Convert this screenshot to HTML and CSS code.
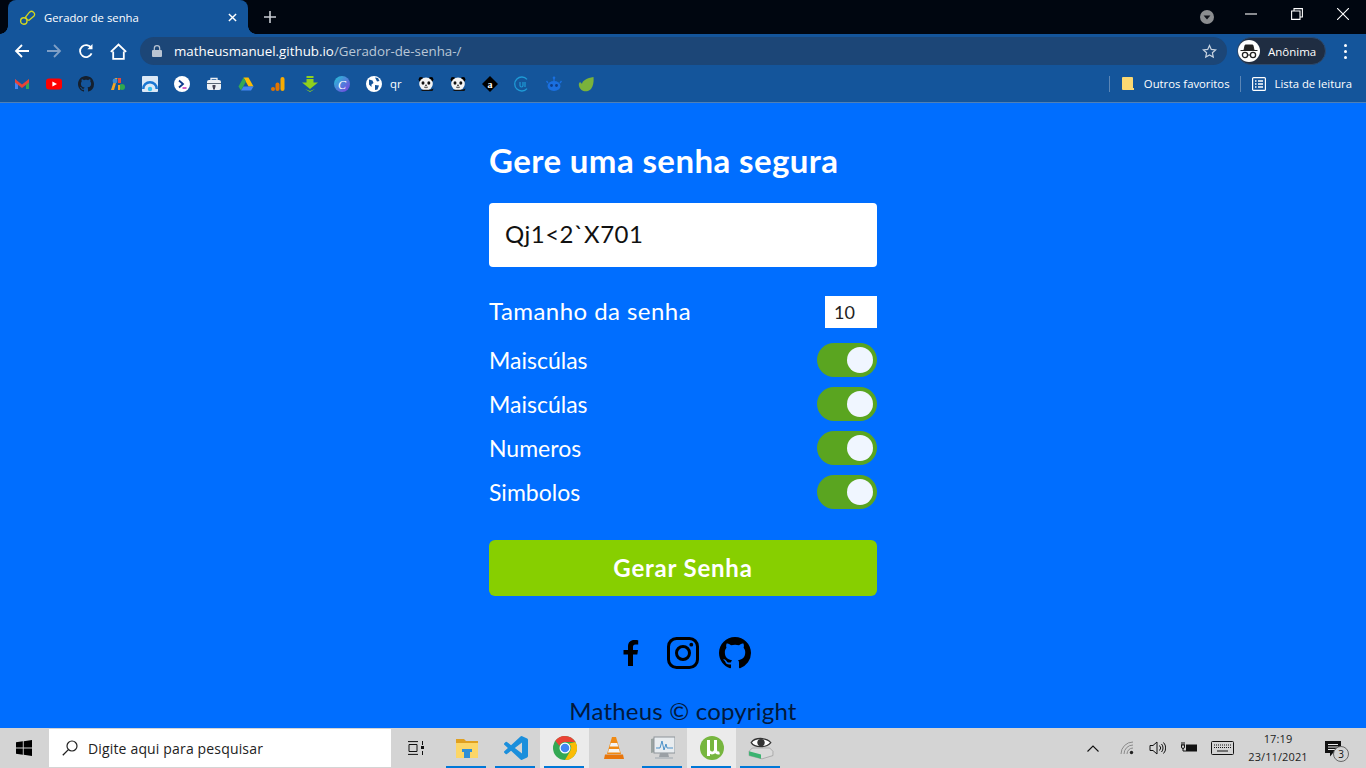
FILE: index.html
```html
<!DOCTYPE html>
<html lang="pt-BR">
<head>
<meta charset="utf-8">
<title>Gerador de senha</title>
<link rel="stylesheet" href="styles.css">
</head>
<body>
<svg class="defs" width="0" height="0" aria-hidden="true">
  <defs>
    <symbol id="octo" viewBox="0 0 16 16"><path d="M8 0C3.58 0 0 3.58 0 8c0 3.54 2.29 6.53 5.47 7.59.4.07.55-.17.55-.38 0-.19-.01-.82-.01-1.49-2.01.37-2.53-.49-2.69-.94-.09-.23-.48-.94-.82-1.13-.28-.15-.68-.52-.01-.53.63-.01 1.08.58 1.23.82.72 1.21 1.87.87 2.33.66.07-.52.28-.87.51-1.07-1.78-.2-3.64-.89-3.64-3.95 0-.87.31-1.59.82-2.15-.08-.2-.36-1.02.08-2.12 0 0 .67-.21 2.2.82.64-.18 1.32-.27 2-.27.68 0 1.36.09 2 .27 1.53-1.04 2.2-.82 2.2-.82.44 1.1.16 1.92.08 2.12.51.56.82 1.27.82 2.15 0 3.07-1.87 3.75-3.65 3.95.29.25.54.73.54 1.48 0 1.07-.01 1.93-.01 2.2 0 .21.15.46.55.38A8.013 8.013 0 0016 8c0-4.42-3.58-8-8-8z"/></symbol>
    <symbol id="panda" viewBox="0 0 16 16"><circle cx="3" cy="3.500" r="2.400" fill="#000"/><circle cx="13" cy="3.500" r="2.400" fill="#000"/><ellipse cx="8" cy="8" rx="6.800" ry="6.400" fill="#f4f4f4"/><ellipse cx="5" cy="7" rx="1.500" ry="1.800" fill="#111"/><ellipse cx="10.800" cy="7" rx="1.500" ry="1.800" fill="#111"/><circle cx="8" cy="9.500" r=".9" fill="#333"/><path d="M6 11q2 1.600 4 0" stroke="#555" fill="none"/><path d="M2.500 15h12l1-2.500-3 1.300H5z" fill="#111"/></symbol>
  </defs>
</svg>

<header class="browser">
  <div class="tabstrip">
    <div class="tab">
      <svg class="tab-fav" viewBox="0 0 17 17"><path d="M6.500 8.200l4-5a3 3 0 014.500 3.900l-5 4.200-1.600-.4z" fill="none" stroke="#d4d81e" stroke-width="1.300"/><circle cx="4.800" cy="12" r="3.200" fill="none" stroke="#d4d81e" stroke-width="1.400"/></svg>
      <span class="tab-title">Gerador de senha</span>
      <svg class="tab-x" viewBox="0 0 10 10"><path d="M1 1l8 8M9 1L1 9" stroke="#fff" stroke-width="1.600"/></svg>
    </div>
    <svg class="newtab" viewBox="0 0 12 12"><path d="M6 0v12M0 6h12" stroke="#c8ccd2" stroke-width="1.600"/></svg>
    <div class="strip-spacer"></div>
    <svg class="tabsearch" viewBox="0 0 14 14"><circle cx="7" cy="7" r="7" fill="#8b8d90"/><path d="M3.600 5.400h6.800L7 9.400z" fill="#10131a"/></svg>
    <div class="winbtn"><svg viewBox="0 0 10 10"><path d="M0 5h10" stroke="#fff" stroke-width=".9"/></svg></div>
    <div class="winbtn"><svg viewBox="0 0 10 10"><path d="M.5 2.500h7v7h-7zM2.500 2.500v-2h7v7h-2" fill="none" stroke="#fff" stroke-width=".9"/></svg></div>
    <div class="winbtn"><svg viewBox="0 0 10 10"><path d="M0 0l10 10M10 0L0 10" stroke="#fff" stroke-width=".9"/></svg></div>
  </div>

  <div class="toolbar">
    <button class="navbtn"><svg viewBox="0 0 16 16" width="16" height="16"><path d="M15 8H2M8 2L2 8l6 6" fill="none" stroke="#fff" stroke-width="1.800"/></svg></button>
    <button class="navbtn"><svg viewBox="0 0 16 16" width="16" height="16"><path d="M1 8h13M8 2l6 6-6 6" fill="none" stroke="#7f9fc6" stroke-width="1.800"/></svg></button>
    <button class="navbtn"><svg viewBox="0 0 16 16" width="16" height="16"><path d="M13.600 10.400A6 6 0 1113.200 5" fill="none" stroke="#fff" stroke-width="1.800"/><path d="M14.500 1v5.200H9.300z" fill="#fff"/></svg></button>
    <button class="navbtn"><svg viewBox="0 0 16 16" width="17" height="17"><path d="M3 8v7h10V8M.8 8.400L8 1.400l7.200 7" fill="none" stroke="#fff" stroke-width="1.700"/></svg></button>
    <div class="omnibox">
      <svg class="lock" viewBox="0 0 10 12" width="10" height="12"><path d="M2.300 5V3.400a2.700 2.700 0 015.400 0V5" fill="none" stroke="#b9c4d2" stroke-width="1.200"/><rect y="5" width="10" height="7" rx="1" fill="#b9c4d2"/></svg>
      <span class="url"><span class="url-host">matheusmanuel.github.io</span>/Gerador-de-senha-/</span>
      <svg class="star" viewBox="0 0 16 16" width="15" height="15"><path d="M8 1.600l1.900 4.200 4.600.5-3.400 3.100.9 4.500-4-2.300-4 2.300.9-4.500L1.500 6.300l4.600-.5z" fill="none" stroke="#c8d3e0" stroke-width="1.300"/></svg>
    </div>
    <div class="profile">
      <span class="avatar"><svg viewBox="0 0 20 20" width="20" height="20"><path d="M1.500 9.500h17M5 9l1.200-5h7.600L15 9z" fill="#222" stroke="#222"/><circle cx="6" cy="14" r="2.600" fill="none" stroke="#222" stroke-width="1.300"/><circle cx="14" cy="14" r="2.600" fill="none" stroke="#222" stroke-width="1.300"/><path d="M8.500 14h3" stroke="#222"/></svg></span>
      <span class="profile-name">Anônima</span>
    </div>
    <div class="menu-dots"><i></i><i></i><i></i></div>
  </div>

  <nav class="bookmarks">
    <span class="bm"><svg viewBox="0 0 16 16"><path d="M1 3v10h3V7z" fill="#4285f4"/><path d="M15 3v10h-3V7z" fill="#34a853"/><path d="M1 3l7 5.500L15 3v3.500L8 12 1 6.500z" fill="#ea4335"/></svg></span>
    <span class="bm"><svg viewBox="0 0 16 16"><rect y="2.500" width="16" height="11" rx="3" fill="#f00"/><path d="M6.400 5.400L11 8l-4.600 2.600z" fill="#fff"/></svg></span>
    <span class="bm"><svg viewBox="0 0 16 16" fill="#15202e"><use href="#octo"/></svg></span>
    <span class="bm"><svg viewBox="0 0 16 16"><path d="M1 14L5 2h2.500L4 14z" fill="#f5a623"/><circle cx="5" cy="5" r="2.400" fill="#3d8bd4"/><path d="M8 2h3v5H8z" fill="#e8483a"/><circle cx="12" cy="11" r="3" fill="#2fa84f"/><path d="M8 9h2v5H8z" fill="#f5a623"/></svg></span>
    <span class="bm"><svg viewBox="0 0 16 16"><rect width="16" height="16" rx="1" fill="#dbe8f6"/><path d="M0 13a8 8 0 0116 0h-2.500a5.500 5.500 0 00-11 0z" fill="#1976d2"/><circle cx="8" cy="13" r="2.200" fill="#35c0ef"/></svg></span>
    <span class="bm"><svg viewBox="0 0 16 16"><circle cx="8" cy="8" r="8" fill="#fff"/><path d="M5 4.500L9 8l-4 3.500" fill="none" stroke="#0b3a8c" stroke-width="1.800"/><path d="M8.500 12h4" stroke="#c02fb0" stroke-width="1.500"/></svg></span>
    <span class="bm"><svg viewBox="0 0 16 16"><rect x="1" y="4" width="14" height="10" rx="2" fill="#eef1f5"/><path d="M5 4V2.500h6V4" fill="none" stroke="#eef1f5" stroke-width="1.300"/><path d="M1 7.500h14" stroke="#5a6776"/><path d="M6.500 9h3v2.500H9v2H7v-2h-.5z" fill="#445"/></svg></span>
    <span class="bm"><svg viewBox="0 0 16 16"><path d="M5.500 1.500h5l5 9h-5z" fill="#fbbc04"/><path d="M5.500 1.500L.5 10.500 3 14.500l5-9z" fill="#34a853"/><path d="M3 14.500h10l2.500-4h-10z" fill="#4285f4"/></svg></span>
    <span class="bm"><svg viewBox="0 0 16 16"><rect x="10.500" y="1" width="4" height="14" rx="2" fill="#f9ab00"/><rect x="5.500" y="6.500" width="4" height="8.500" rx="2" fill="#e37400"/><circle cx="3" cy="13" r="2" fill="#e37400"/></svg></span>
    <span class="bm"><svg viewBox="0 0 16 16"><path d="M4.500 0h7v2h-7zM4.500 3h7v3.500H16L8 13 0 6.500h4.500z" fill="#8fd01c"/><path d="M3 13l5 3 5-3-5 2z" fill="#8fd01c"/></svg></span>
    <span class="bm"><svg viewBox="0 0 16 16"><defs><linearGradient id="cv" x1="0" y1="0" x2="1" y2="1"><stop offset="0" stop-color="#22c6d6"/><stop offset="1" stop-color="#7c3ce0"/></linearGradient></defs><circle cx="8" cy="8" r="8" fill="url(#cv)"/><text class="ico-c" x="8" y="12.500" text-anchor="middle">C</text></svg></span>
    <span class="bm bm-text"><svg viewBox="0 0 16 16"><circle cx="8" cy="8" r="8" fill="#fff"/><path d="M3 3.500l3.500 1 1 2.500-2 1.500v2.500L3 8.500zM9 1.500l3 .5 1.500 3-2.500.5zM9 9l4 .5-1.500 4-2.500.5z" fill="#14559b"/></svg><span>qr</span></span>
    <span class="bm"><svg viewBox="0 0 16 16"><use href="#panda"/></svg></span>
    <span class="bm"><svg viewBox="0 0 16 16"><use href="#panda"/></svg></span>
    <span class="bm"><svg viewBox="0 0 16 16"><path d="M8 0l8 8-8 8-8-8z" fill="#000"/><text class="ico-a" x="8" y="11.500" text-anchor="middle">a</text></svg></span>
    <span class="bm"><svg viewBox="0 0 16 16"><path d="M13 3.400A7 7 0 1013 12.600" fill="none" stroke="#1e9ad6" stroke-width="1.300"/><path d="M6 6v3.500a1.500 1.500 0 003 0V6M11 6v5" fill="none" stroke="#1e9ad6" stroke-width="1.200"/></svg></span>
    <span class="bm"><svg viewBox="0 0 16 16"><ellipse cx="8" cy="10" rx="6.500" ry="5" fill="#1a6fe0"/><path d="M8 5V2M2 7L.5 5M14 7l1.500-2" stroke="#1a6fe0" stroke-width="1.300"/><circle cx="8" cy="1.800" r="1.300" fill="#1a6fe0"/><circle cx="5.500" cy="9.500" r="1.400" fill="#0e3f8a"/><circle cx="10.500" cy="9.500" r="1.400" fill="#0e3f8a"/></svg></span>
    <span class="bm"><svg viewBox="0 0 16 16"><path d="M15.500 1C15.500 1 16.500 9 13 13c-2.500 2.800-7 3-9.500 1C1 12 0 8 1.500 6.500 2.500 5.500 3.500 7 4 8c0-3 5-6 11.500-7z" fill="#7ab23b"/></svg></span>
    <span class="bm-spacer"></span>
    <span class="bm-sep"></span>
    <span class="bm-named bm-folder"><svg viewBox="0 0 12 14" width="12" height="14"><path d="M0 1a1 1 0 011-1h9a1 1 0 011 1v10h1v2H1a1 1 0 01-1-1z" fill="#fbd872"/></svg><span>Outros favoritos</span></span>
    <span class="bm-sep"></span>
    <span class="bm-named bm-list"><svg viewBox="0 0 14 14" width="14" height="14"><rect x=".6" y=".6" width="12.800" height="12.800" rx="1" fill="none" stroke="#fff" stroke-width="1.200"/><path d="M3 4h1.500M6 4h5M3 7h1.500M6 7h5M3 10h1.500M6 10h5" stroke="#fff" stroke-width="1.300"/></svg><span>Lista de leitura</span></span>
  </nav>
</header>

<main class="page">
  <h1 class="title">Gere uma senha segura</h1>
  <div class="password">Qj1&lt;2`X701</div>
  <div class="options">
    <div class="opt opt-size"><span>Tamanho da senha</span><span class="size-box">10</span></div>
    <div class="opt"><span>Maiscúlas</span><span class="toggle"><i></i></span></div>
    <div class="opt"><span>Maiscúlas</span><span class="toggle"><i></i></span></div>
    <div class="opt"><span>Numeros</span><span class="toggle"><i></i></span></div>
    <div class="opt"><span>Simbolos</span><span class="toggle"><i></i></span></div>
  </div>
  <button class="generate">Gerar Senha</button>
  <div class="socials">
    <svg class="soc-f" viewBox="0 0 17 26" width="17" height="26"><path d="M5 26V14.500H0.500V10H5V6.500C5 2.200 7.500 0 11.300 0c1.800 0 3.400.1 3.900.2v4.300h-2.700c-2 0-2.500 1-2.500 2.400V10h5l-.7 4.500h-4.300V26z"/></svg>
    <svg viewBox="0 0 32 32" width="32" height="32"><rect x="1.500" y="1.500" width="29" height="29" rx="8" fill="none" stroke="#000" stroke-width="3"/><circle cx="16" cy="16" r="6.500" fill="none" stroke="#000" stroke-width="3"/><circle cx="24.300" cy="7.700" r="1.900"/></svg>
    <svg viewBox="0 0 16 16" width="32" height="32"><use href="#octo"/></svg>
  </div>
  <p class="copyright">Matheus © copyright</p>
</main>

<footer class="taskbar">
  <svg class="win" viewBox="0 0 16 16" width="16" height="16"><path d="M0 2.300l6.800-1v6.300H0zM7.700 1.200L16 0v7.600H7.700zM0 8.400h6.800v6.300l-6.800-1zM7.700 8.400H16V16l-8.300-1.200z"/></svg>
  <div class="search">
    <svg viewBox="0 0 16 16" width="16" height="16"><circle cx="10" cy="6" r="5" fill="none" stroke="#222" stroke-width="1.200"/><path d="M6.400 9.600L.8 15.300" stroke="#222" stroke-width="1.300"/></svg>
    <span>Digite aqui para pesquisar</span>
  </div>
  <svg class="taskview" viewBox="0 0 16 14" width="16" height="14"><path d="M0 .6h10M0 13.400h10M1 3.500h8v7H1zM14.500 0v4M14.500 10v4" fill="none" stroke="#111"/><rect x="13" y="5" width="3" height="3" fill="#111"/></svg>
  <div class="apps">
    <span class="app on"><svg viewBox="0 0 22 20" width="22" height="20"><path d="M0 1h8l2 2h12v3H0z" fill="#e0a020"/><path d="M0 5h22v15H0z" fill="#fcd667"/><path d="M6 11h10v3h-2v6H8v-6H6z" fill="#2f8fd8"/></svg></span>
    <span class="app on"><svg viewBox="0 0 24 24" width="24" height="24"><path d="M23.150 2.587L18.210.21a1.494 1.494 0 00-1.705.29l-9.460 8.630-4.120-3.128a.999.999 0 00-1.276.057L.327 7.261A1 1 0 00.326 8.740L3.899 12 .326 15.260a1 1 0 00.001 1.479L1.650 17.940a.999.999 0 001.276.057l4.120-3.128 9.460 8.630a1.492 1.492 0 001.704.29l4.942-2.377A1.500 1.500 0 0024 20.060V3.939a1.500 1.500 0 00-.85-1.352zm-5.146 14.861L10.826 12l7.178-5.448v10.896z" fill="#1b8fdc"/></svg></span>
    <span class="app on active"><svg viewBox="0 0 24 24" width="24" height="24"><circle cx="12" cy="12" r="12" fill="#34a853"/><path d="M12 0a12 12 0 0110.400 6H12a6 6 0 00-5.600 3.800L2.300 4.700A12 12 0 0112 0z" fill="#ea4335"/><path d="M22.400 6A12 12 0 0112 24l5.200-9A6 6 0 0016 7.500z" fill="#fbbc05"/><circle cx="12" cy="12" r="5.500" fill="#fff"/><circle cx="12" cy="12" r="4.300" fill="#4285f4"/></svg></span>
    <span class="app"><svg viewBox="0 0 20 24" width="20" height="24"><path d="M8 1h4l5 17H3z" fill="#f08a13"/><path d="M6.800 7h6.400l1 3.500H5.800zM5 13h10l1 3.500H4z" fill="#f4f4f4"/><path d="M1 18.500h18l1 4.500H0z" fill="#e8760c"/></svg></span>
    <span class="app on"><svg viewBox="0 0 24 24" width="24" height="24"><path d="M0 3l4-1v14l-4 1z" fill="#9aa3a0"/><rect x="3" y="1" width="21" height="16" fill="#e8ecef" stroke="#8d9499"/><path d="M5 12h4l2-7 2 9 2-6 1 4h6" fill="none" stroke="#4a90c8"/><path d="M9 17h8l1 4H8z" fill="#9aa0a5"/><path d="M4 21h18v2H4z" fill="#b9bec2"/></svg></span>
    <span class="app on active"><svg viewBox="0 0 24 24" width="24" height="24"><circle cx="12" cy="12" r="12" fill="#77b63f"/><path d="M8.500 4v16M8.500 13.500a3.500 3.500 0 007 0V4M15.500 13c0 3.500 1.500 4.500 4 3.800" fill="none" stroke="#fff" stroke-width="3"/></svg></span>
    <span class="app on"><svg viewBox="0 0 24 24" width="26" height="26"><path d="M3 7c3-5 14-5 18 0-4 5-15 5-18 0z" fill="#fff" stroke="#333" stroke-width="1.200"/><circle cx="12" cy="7" r="3.400" fill="#333"/><path d="M1 15l3-3h16l3 3v4l-10 3-12-3z" fill="#dadada" stroke="#888" stroke-width=".5"/><path d="M1 15l11 3v4L1 19z" fill="#3cb371"/></svg></span>
  </div>
  <div class="task-spacer"></div>
  <div class="tray">
    <svg class="t-chev" viewBox="0 0 12 7" width="12" height="7"><path d="M.5 6.500L6 1l5.500 5.500" fill="none" stroke="#111" stroke-width="1.100"/></svg>
    <svg class="t-wifi" viewBox="0 0 14 14" width="14" height="14"><path d="M1 13A12 12 0 0113 1M4 13a9 9 0 019-9M7 13a6 6 0 016-6" fill="none" stroke="#8a8a8a"/><circle cx="11.500" cy="11.500" r="1.700" fill="#222"/></svg>
    <svg class="t-vol" viewBox="0 0 17 14" width="17" height="14"><path d="M1 4.500h3L8 1v12L4 9.500H1z" fill="none" stroke="#111"/><path d="M10.500 4.500a3.500 3.500 0 010 5M12.500 3a6 6 0 010 8M14.500 1.500a8 8 0 010 11" fill="none" stroke="#111"/></svg>
    <svg class="t-bat" viewBox="0 0 16 12" width="16" height="12"><path d="M0 3h4M1 3V0M3 3V0M.5 3v2a1.500 1.500 0 003 0V3M2 6.500V9h3" fill="none" stroke="#111"/><rect x="5" y="2.500" width="11" height="7" fill="#111"/></svg>
    <svg class="t-kbd" viewBox="0 0 23 14" width="23" height="14"><rect x=".5" y=".5" width="22" height="13" rx="1" fill="none" stroke="#111"/><path d="M3 4h17M3 6.500h17" stroke="#111" stroke-dasharray="1 1"/><path d="M6 10h11" stroke="#111"/></svg>
    <div class="clock"><span>17:19</span><span>23/11/2021</span></div>
    <div class="notify">
      <svg viewBox="0 0 16 16" width="16" height="16"><path d="M0 0h16v12H8l-3 3.500V12H0z" fill="#111"/><path d="M3 3.500h10M3 6h10M3 8.500h7" stroke="#eee"/></svg>
      <span class="notify-badge">3</span>
    </div>
  </div>
</footer>
</body>
</html>
```

FILE: styles.css
```css
* { box-sizing: border-box; }
html, body { margin: 0; height: 100%; }
body {
  width: 1366px;
  height: 768px;
  overflow: hidden;
  display: flex;
  flex-direction: column;
  background: #006eff;
  font-family: "Open Sans", "Noto Sans", sans-serif;
}
.defs { position: absolute; }

/* browser chrome */
.browser { flex: none; height: 103px; display: flex; flex-direction: column; background: #14559b; border-bottom: 1px solid #4f80b6; }
.tabstrip { height: 34px; flex: none; display: flex; align-items: center; background: #000610; padding-left: 8px; color: #fff; }
.tab { position: relative; width: 240px; height: 34px; background: #14559b; border-radius: 8px 8px 0 0; display: flex; align-items: center; padding: 0 11px; }
.tab::before, .tab::after { content: ""; position: absolute; bottom: 0; width: 8px; height: 8px; }
.tab::before { left: -8px; background: radial-gradient(circle at 0 0, #000610 7.5px, #14559b 8px); }
.tab::after { right: -8px; background: radial-gradient(circle at 100% 0, #000610 7.5px, #14559b 8px); }
.tab-fav { width: 17px; height: 17px; flex: none; }
.tab-title { margin-left: 8px; font-size: 11.3px; flex: 1; white-space: nowrap; }
.tab-x { width: 9px; height: 9px; flex: none; }
.newtab { width: 12px; height: 12px; margin-left: 16px; flex: none; }
.strip-spacer { flex: 1; }
.tabsearch { width: 14px; height: 14px; flex: none; margin-right: 14px; }
.winbtn { width: 46px; height: 34px; flex: none; display: flex; align-items: center; justify-content: center; padding-bottom: 6px; }
.winbtn svg { width: 12px; height: 12px; }

.toolbar { height: 33px; flex: none; display: flex; align-items: center; padding: 1px 0 0 6px; }
.navbtn { width: 32px; height: 28px; flex: none; border: 0; padding: 0; background: none; display: flex; align-items: center; justify-content: center; }
.omnibox { width: 1087px; height: 28px; margin-left: 6px; flex: none; border-radius: 14px; background: #1c4677; display: flex; align-items: center; padding: 0 10px 0 12px; color: #b9c6d6; }
.lock { flex: none; }
.url { margin-left: 12px; font-size: 13.33px; white-space: nowrap; flex: 1; }
.url-host { color: #fff; }
.star { flex: none; }
.profile { width: 89px; height: 28px; margin-left: 10px; flex: none; border-radius: 14px; background: #1f2d42; border: 1px solid #2a4a70; display: flex; align-items: center; color: #fff; font-size: 11.5px; }
.avatar { width: 22px; height: 22px; border-radius: 50%; background: #fff; display: flex; align-items: center; justify-content: center; flex: none; }
.profile-name { margin-left: 8px; white-space: nowrap; }
.menu-dots { margin-left: 18px; display: flex; flex-direction: column; gap: 3px; }
.menu-dots i { display: block; width: 3px; height: 3px; border-radius: 50%; background: #fff; }

.bookmarks { height: 35px; flex: none; display: flex; align-items: center; padding: 0 0 2px 6px; color: #fff; font-size: 11.3px; }
.bm { width: 32px; flex: none; display: flex; align-items: center; justify-content: center; }
.bm svg { width: 16px; height: 16px; flex: none; }
.bm-text { width: 52px; justify-content: flex-start; padding-left: 8px; }
.bm-text span { margin-left: 8px; }
.bm-spacer { flex: 1; }
.bm-sep { width: 1px; height: 16px; background: #5b86b6; flex: none; }
.bm-named { display: flex; align-items: center; white-space: nowrap; flex: none; }
.bm-folder { margin: 0 10px 0 12px; gap: 10px; }
.bm-list { margin: 0 14px 0 11px; gap: 9px; }
.ico-c { font: italic 12px "Liberation Serif", serif; fill: #fff; }
.ico-a { font: 700 10px "Liberation Serif", serif; fill: #fff; }

/* page */
.page { flex: 1; min-height: 0; overflow: hidden; display: flex; flex-direction: column; align-items: center; font-family: "Lato", "Noto Sans", sans-serif; color: #fff; }
.title { width: 388px; margin: 36px 0 0; font-size: 33px; letter-spacing: .4px; line-height: 42px; font-weight: 700; white-space: nowrap; }
.password { width: 388px; height: 64px; margin-top: 22px; flex: none; background: #fff; border-radius: 4px; color: #111; font-size: 24px; letter-spacing: .5px; display: flex; align-items: center; padding: 0 0 4px 16px; }
.options { width: 388px; margin-top: 29px; display: flex; flex-direction: column; gap: 10px; font-size: 23px; }
.opt { height: 34px; display: flex; align-items: center; justify-content: space-between; }
.opt-size { height: 32px; margin-bottom: 5px; font-size: 24px; letter-spacing: .45px; }
.opt-size > span:first-child { padding-bottom: 4px; }
.size-box { width: 52px; height: 32px; background: #fff; color: #222; font-size: 18px; letter-spacing: 0; display: flex; align-items: center; padding: 0 0 1px 9px; }
.toggle { width: 60px; height: 34px; border-radius: 17px; background: #5aa520; display: flex; align-items: center; justify-content: flex-end; padding-right: 4px; }
.toggle i { display: block; width: 26px; height: 26px; border-radius: 50%; background: #f0f6ff; }
.generate { width: 388px; height: 56px; margin-top: 31px; flex: none; border: 0; border-radius: 6px; background: #87cf00; color: #fff; font: 700 24px "Lato", "Noto Sans", sans-serif; letter-spacing: .8px; padding: 0 0 2px; }
.socials { margin-top: 41px; padding-left: 8px; display: flex; align-items: center; gap: 20px; }
.soc-f { margin-right: 7px; }
.copyright { margin: 26px 0 0; color: #02193c; font-size: 24px; line-height: 32px; font-weight: 400; letter-spacing: .2px; white-space: nowrap; }

/* taskbar */
.taskbar { height: 40px; flex: none; background: #d4d4d4; display: flex; align-items: center; }
.win { margin-left: 16px; flex: none; }
.search { width: 342px; height: 38px; margin-left: 17px; flex: none; background: #fff; display: flex; align-items: center; padding-left: 13px; font-size: 14px; letter-spacing: .16px; color: #222; }
.search span { margin-left: 10px; white-space: nowrap; }
.taskview { margin-left: 17px; flex: none; }
.apps { display: flex; margin-left: 18px; height: 40px; flex: none; }
.app { width: 49px; height: 40px; display: flex; align-items: center; justify-content: center; position: relative; }
.app.on::after { content: ""; position: absolute; left: 4px; right: 5px; bottom: 0; height: 2px; background: #0078d7; }
.app.active { background: #ebebeb; }
.task-spacer { flex: 1; }
.tray { display: flex; align-items: center; height: 40px; flex: none; }
.t-chev { margin-right: 21px; }
.t-wifi { margin-right: 15px; }
.t-vol { margin-right: 15px; }
.t-bat { margin-right: 14px; }
.t-kbd { margin-right: 10px; }
.clock { width: 68px; display: flex; flex-direction: column; align-items: center; font-size: 11px; letter-spacing: .1px; line-height: 18px; color: #222; }
.notify { position: relative; margin: 0 25px 0 13px; width: 16px; height: 16px; }
.notify-badge { position: absolute; left: 8px; top: 6px; width: 16px; height: 16px; border-radius: 50%; border: 1px solid #666; background: #d4d4d4; font-size: 10px; line-height: 14px; text-align: center; color: #111; }
```
